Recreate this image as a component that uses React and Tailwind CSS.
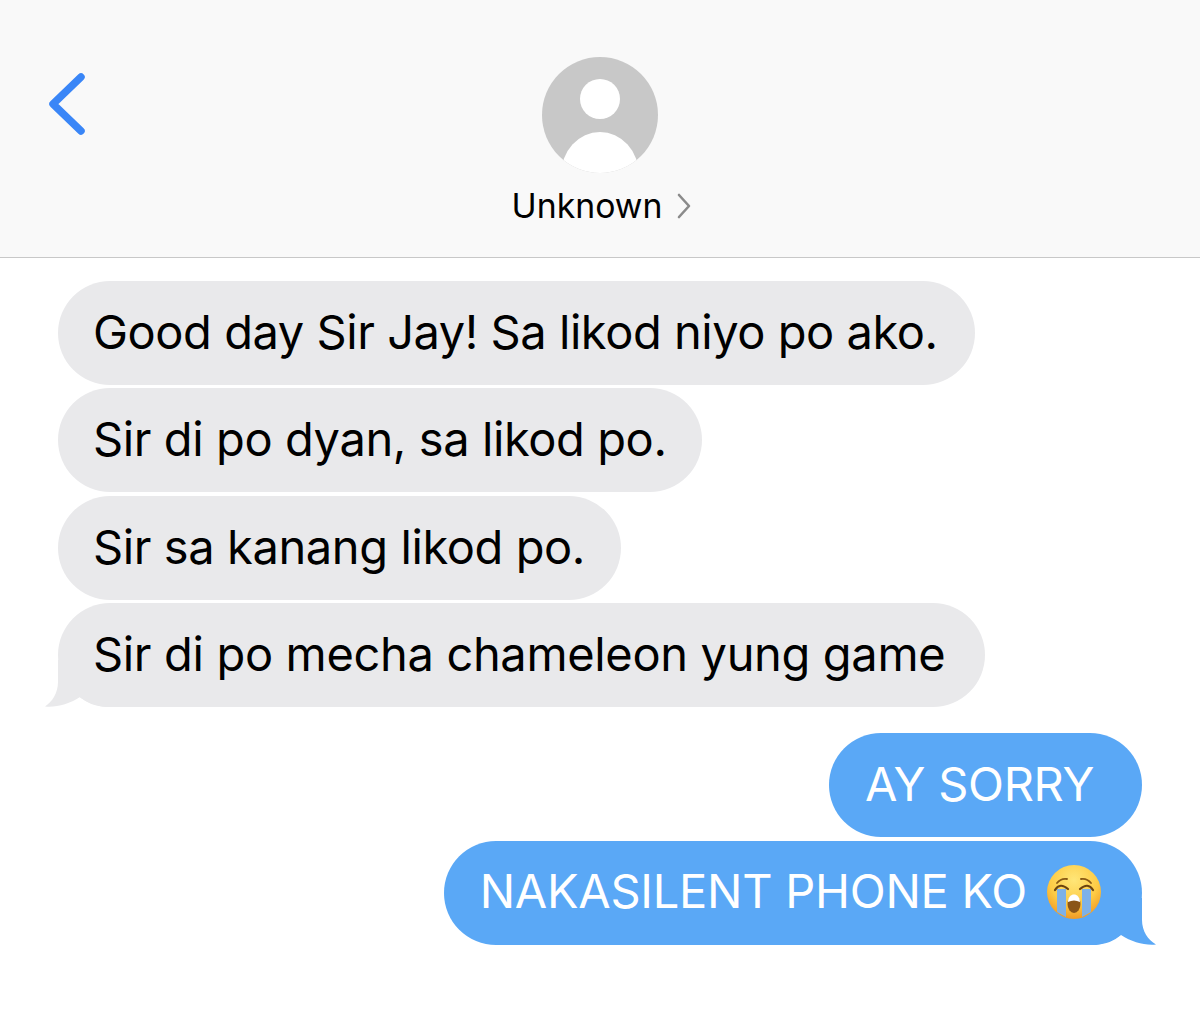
const received = [
  { text: 'Good day Sir Jay! Sa likod niyo po ako.', row: 'pr-[37px] tracking-[-0.45px]' },
  { text: 'Sir di po dyan, sa likod po.', row: 'pr-[35px] tracking-[-0.4px]' },
  { text: 'Sir sa kanang likod po.', row: 'pr-9 tracking-[-0.4px]' },
  { text: 'Sir di po mecha chameleon yung game', row: 'pr-[40px] tracking-[-0.34px]' },
];

// Tail shapes sit over the bottom corner of the last bubble in a group
const LeftTail = () => (
  <svg className="absolute left-[-13px] bottom-0" width="70" height="47" viewBox="0 0 70 47">
    <path d="M13 0 L13 22 C13 33 7 42 0 46.5 C12 47.5 24 44 35 37 C42 43 50 46 60 47 L70 47 L70 0 Z" fill="#e9e9eb" />
  </svg>
);

const RightTail = () => (
  <svg className="absolute right-[-14px] bottom-0" width="70" height="47" viewBox="0 0 70 47">
    <path d="M56 0 L56 22 C56 33 62 42 70 46.5 C58 47.5 46 44 35 37 C28 43 20 46 10 47 L0 47 L0 0 Z" fill="#5aa8f6" />
  </svg>
);

const CryingFace = () => (
  <svg className="ml-[19px] shrink-0" width="56" height="56" viewBox="0 0 56 56">
    <defs>
      <radialGradient id="face" cx="50%" cy="28%" r="72%">
        <stop offset="0%" stopColor="#ffe678" />
        <stop offset="62%" stopColor="#fdcb45" />
        <stop offset="100%" stopColor="#f09a24" />
      </radialGradient>
    </defs>
    <circle cx="28" cy="28" r="27" fill="url(#face)" />
    <path d="M11 25 L20 25 L20 53 L11 48 Z" fill="#7db1e8" />
    <path d="M36 25 L45 25 L45 48 L36 53 Z" fill="#7db1e8" />
    <path d="M9 26 Q14 18 22 25" fill="none" stroke="#6b4310" strokeWidth="2.2" strokeLinecap="round" />
    <path d="M34 25 Q42 18 47 26" fill="none" stroke="#6b4310" strokeWidth="2.2" strokeLinecap="round" />
    <path d="M11 19 Q15 14 21 15" fill="none" stroke="#8a5a14" strokeWidth="1.8" strokeLinecap="round" />
    <path d="M35 15 Q41 14 45 19" fill="none" stroke="#8a5a14" strokeWidth="1.8" strokeLinecap="round" />
    <ellipse cx="28" cy="40" rx="6.5" ry="9" fill="#8a5518" />
    <path d="M22 38 C22 28 34 28 34 38 C30 36 26 36 22 38 Z" fill="#fff" />
  </svg>
);

const Bubble = ({ children, tail, color, className = '' }) => (
  <div className={`relative flex items-center h-[104px] rounded-[52px] text-[47px] ${color} ${className}`}>
    {tail}
    <span className="relative -top-px">{children}</span>
  </div>
);

export default function App() {
  return (
    <div className="w-[1200px] h-[1033px] bg-white font-['Inter','Liberation_Sans',sans-serif] overflow-hidden">
      <header className="relative flex flex-col items-center h-[258px] pt-[57px] bg-[#f9f9f9] border-b border-[#c8c8c8]">
        <svg className="absolute left-[48px] top-[72px]" width="38" height="64" viewBox="0 0 38 64">
          <path d="M33 5 L5 32 L33 59" fill="none" stroke="#3a86f7" strokeWidth="7.5" strokeLinecap="round" strokeLinejoin="round" />
        </svg>
        <svg width="116" height="116" viewBox="0 0 116 116">
          <defs>
            <clipPath id="avatar">
              <circle cx="58" cy="58" r="58" />
            </clipPath>
          </defs>
          <circle cx="58" cy="58" r="58" fill="#c8c8c8" />
          <circle cx="58" cy="42" r="20" fill="#fff" />
          <ellipse cx="58" cy="118" rx="39" ry="43" fill="#fff" clipPath="url(#avatar)" />
        </svg>
        <div className="flex items-center mt-[13px] ml-[4px] text-[33.8px] leading-[40px] text-black">
          <span>Unknown</span>
          <svg className="ml-[14px]" width="16" height="26" viewBox="0 0 16 26">
            <path d="M3 2 L13 13 L3 24" fill="none" stroke="#8b8b8b" strokeWidth="2.6" strokeLinecap="round" strokeLinejoin="round" />
          </svg>
        </div>
      </header>

      <main className="flex flex-col pt-[23px]">
        <div className="flex flex-col items-start gap-[3.4px] pl-[58px]">
          {received.map(({ text, row }, i) => (
            <Bubble
              key={text}
              color="bg-[#e9e9eb] text-black"
              className={`pl-[35px] ${row}`}
              tail={i === received.length - 1 ? <LeftTail /> : null}
            >
              {text}
            </Bubble>
          ))}
        </div>
        <div className="flex flex-col items-end gap-[3.4px] pr-[58px] mt-[26px]">
          <Bubble color="bg-[#5aa8f6] text-white" className="pl-9 pr-[48px] tracking-[-0.3px]">AY SORRY</Bubble>
          <Bubble color="bg-[#5aa8f6] text-white" className="pl-9 pr-[40px] tracking-[-0.25px]" tail={<RightTail />}>
            <span className="flex items-center">
              NAKASILENT PHONE KO
              <CryingFace />
            </span>
          </Bubble>
        </div>
      </main>
    </div>
  );
}
